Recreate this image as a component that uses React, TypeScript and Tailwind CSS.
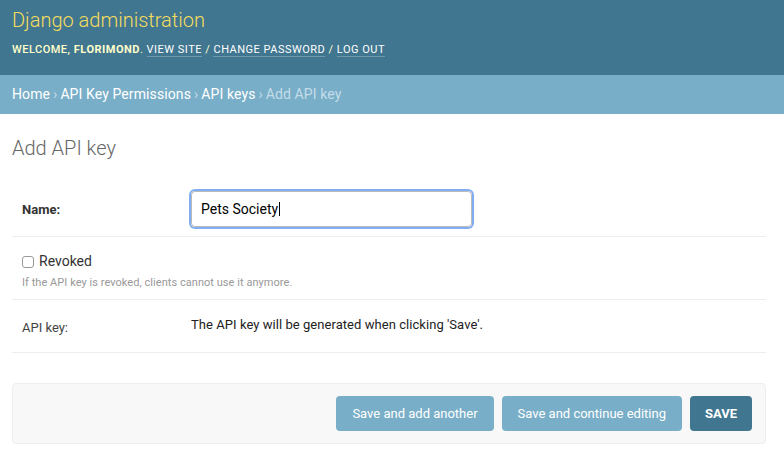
import React from 'react';

const font = { fontFamily: 'Roboto, "Liberation Sans", Arial, sans-serif' };

function Header() {
  return (
    <div className="h-[75px] bg-[#417690] px-3 pt-2">
      <h1 className="text-[20px] leading-[24px] font-light text-[#f5dd5d]">Django administration</h1>
      <div className="mt-[11px] text-[11px] leading-[14px] uppercase tracking-[0.5px] text-[#ffc]">
        <span className="font-medium">Welcome, </span>
        <strong className="font-bold">Florimond</strong>
        <span>. </span>
        <a className="border-b border-white/25 text-white">View site</a>
        <span> / </span>
        <a className="border-b border-white/25 text-white">Change password</a>
        <span> / </span>
        <a className="border-b border-white/25 text-white">Log out</a>
      </div>
    </div>
  );
}

function Breadcrumbs() {
  const sep = <span className="mx-[3px] text-[#c4dce8]">›</span>;
  return (
    <div className="bg-[#79aec8] px-3 py-[11px] text-[14px] leading-[17px] tracking-[0.1px] text-white">
      <a>Home</a>
      {sep}
      <a>API Key Permissions</a>
      {sep}
      <a>API keys</a>
      {sep}
      <span className="text-[#c4dce8]">Add API key</span>
    </div>
  );
}

export default function App() {
  return (
    <div className="min-h-[467px] bg-white text-[#333]" style={font}>
      <Header />
      <Breadcrumbs />
      <div className="pl-3 pr-[18px]">
        <h2 className="mt-[22px] text-[20px] leading-[24px] font-light text-[#666]">Add API key</h2>

        <div className="mt-[21px]">
          {/* Name */}
          <div className="flex h-[56px] border-b border-[#eee] px-[10px] pt-[10px]">
            <label className="w-[169px] pt-[11px] text-[13px] leading-[16px] font-bold text-[#333]">Name:</label>
            <div className="flex h-[36px] w-[281px] items-center rounded-[4px] border border-[#bbb] pl-[9px] text-[14px] text-black shadow-[0_0_0_2px_#80aef3]">
              <span>Pets Society</span>
              <span className="ml-px h-[14px] w-px bg-black" />
            </div>
          </div>

          {/* Revoked */}
          <div className="h-[63px] border-b border-[#eee] px-[10px] pt-[16px]">
            <div className="flex items-center text-[14px] leading-[17px] text-[#333]">
              <span className="mr-[5px] h-[12px] w-[12px] rounded-[3px] border border-[#999] bg-white" />
              <span>Revoked</span>
            </div>
            <p className="mt-[6px] text-[11px] leading-[14px] tracking-[0.05px] text-[#999]">
              If the API key is revoked, clients cannot use it anymore.
            </p>
          </div>

          {/* API key */}
          <div className="flex h-[53px] border-b border-[#eee] px-[10px] pt-[17px]">
            <label className="w-[169px] pt-[3px] text-[13px] leading-[16px] text-[#444]">API key:</label>
            <div className="text-[13px] leading-[16px] tracking-[0.05px] text-[#222]">
              The API key will be generated when clicking 'Save'.
            </div>
          </div>
        </div>

        <div className="mt-[30px] flex justify-end gap-2 rounded-[4px] border border-[#eee] bg-[#f8f8f8] py-3 pr-[13px]">
          <button className="h-[35px] rounded-[4px] bg-[#79aec8] px-4 text-[13px] text-white">
            Save and add another
          </button>
          <button className="h-[35px] rounded-[4px] bg-[#79aec8] px-4 text-[13px] text-white">
            Save and continue editing
          </button>
          <button className="h-[35px] rounded-[4px] bg-[#417690] px-[15px] text-[13px] font-bold uppercase text-white">
            Save
          </button>
        </div>
      </div>
    </div>
  );
}
